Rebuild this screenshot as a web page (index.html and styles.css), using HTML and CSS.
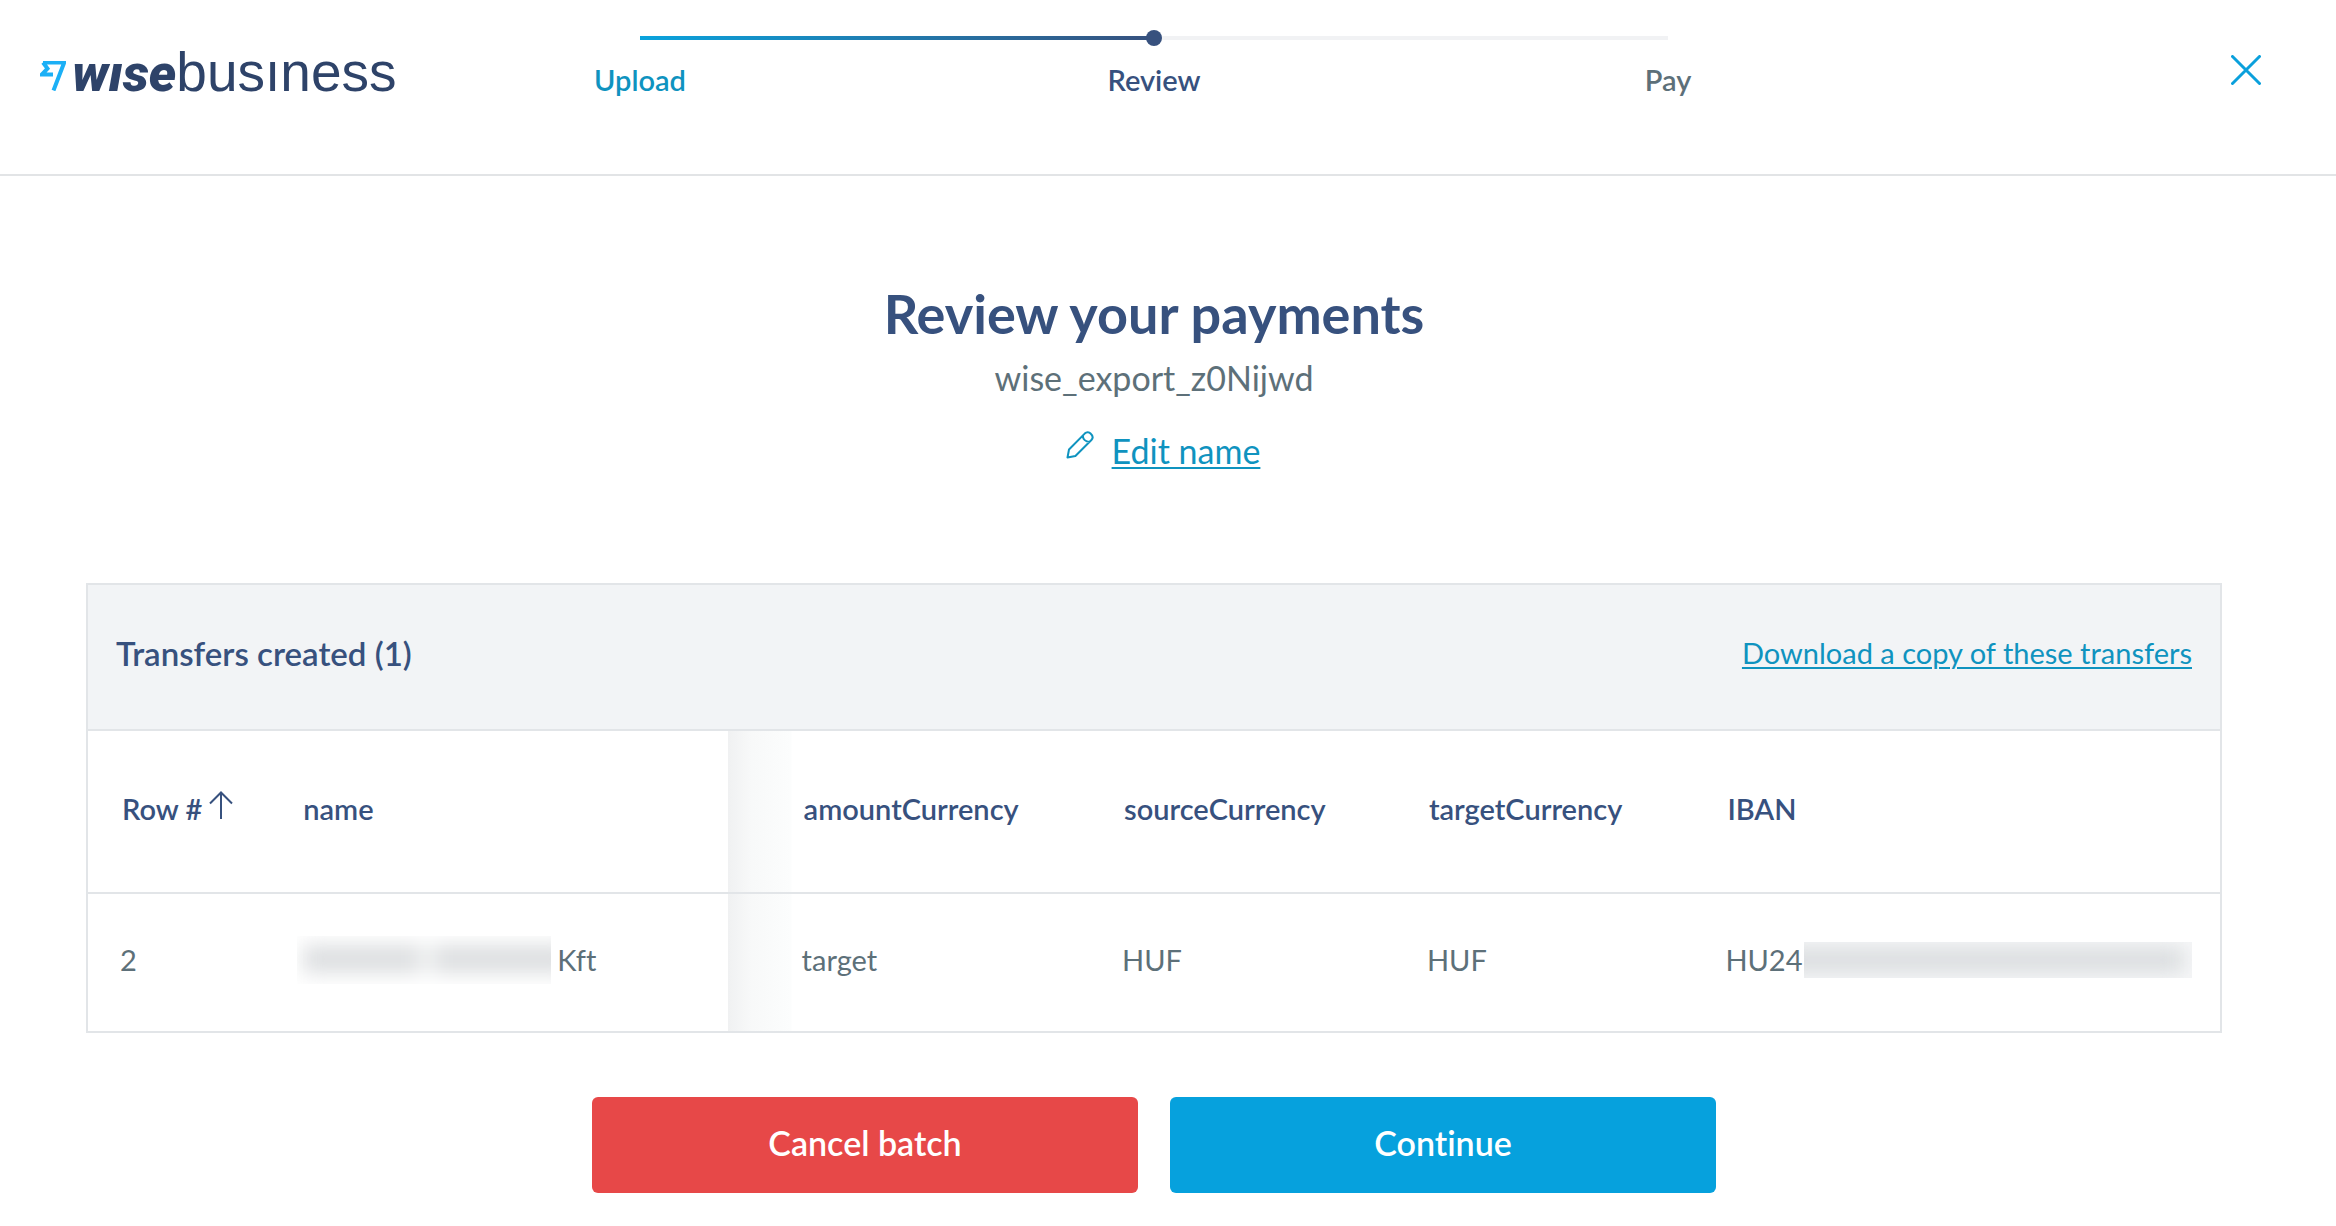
FILE: index.html
```
<!DOCTYPE html>
<html lang="en">
  <head>
    <meta charset="UTF-8" />
    <meta name="viewport" content="width=device-width, initial-scale=1.0" />
    <title>Review your payments</title>
    <link rel="stylesheet" href="styles.css">
  </head>
  <body>
    <header class="topbar">
      <a href="#" class="logo" aria-label="Wise Business">
        <svg class="logo-flag" viewBox="0 0 26 30" aria-hidden="true">
          <path d="M3 1.5H24.2L13.5 29.5M3 1.5L7.5 7.5L1.8 13.6H13" />
        </svg>
        <span class="logo-wise">wıse</span><span class="logo-business">busıness</span>
      </a>

      <nav class="stepper" aria-label="Progress">
        <div class="track">
          <div class="track-done"></div>
        </div>
        <ol class="steps">
          <li><a href="#" class="step done">Upload</a></li>
          <li class="step active" aria-current="step">Review</li>
          <li class="step">Pay</li>
        </ol>
      </nav>

      <button type="button" class="close" aria-label="Close">
        <svg viewBox="0 0 30 30" aria-hidden="true">
          <path d="M1.5 1.5L28.5 28.5M28.5 1.5L1.5 28.5" />
        </svg>
      </button>
    </header>

    <main class="content">
      <section class="intro">
        <h1>Review your payments</h1>
        <p class="batch-name">wise_export_z0Nijwd</p>
        <a href="#" class="edit-name">
          <svg viewBox="0 0 28 28" aria-hidden="true">
            <path d="M1.5 26.5L3 18.5L18.7 2.6C20.6 .8 23 .9 24.8 2.8C27 4.9 27.1 7.2 25.4 9L9.4 25L1.5 26.5ZM16.8 4.6C17 8.2 19.6 10.9 23.4 11" />
          </svg>
          <span>Edit name</span>
        </a>
      </section>

      <section class="panel">
        <div class="panel-header">
          <h2>Transfers created (1)</h2>
          <a href="#">Download a copy of these transfers</a>
        </div>

        <table class="transfers">
          <colgroup>
            <col class="col-row" />
            <col class="col-name" />
            <col class="col-amount" />
            <col class="col-source" />
            <col class="col-target" />
            <col />
          </colgroup>
          <thead>
            <tr>
              <th scope="col" aria-sort="ascending">
                <button type="button" class="sort">
                  Row #
                  <svg viewBox="0 0 24 28" aria-hidden="true">
                    <path d="M12 28V2M1 12.5L12 1.5L23 12.5" />
                  </svg>
                </button>
              </th>
              <th scope="col">name</th>
              <th scope="col" class="edge">amountCurrency</th>
              <th scope="col">sourceCurrency</th>
              <th scope="col">targetCurrency</th>
              <th scope="col">IBAN</th>
            </tr>
          </thead>
          <tbody>
            <tr>
              <td>2</td>
              <td>
                <div class="value"><span class="hidden-name"></span>Kft</div>
              </td>
              <td class="edge">target</td>
              <td>HUF</td>
              <td>HUF</td>
              <td>
                <div class="value">HU241<span class="hidden-iban"></span></div>
              </td>
            </tr>
          </tbody>
        </table>
      </section>

      <div class="actions">
        <button type="button" class="btn btn-cancel">Cancel batch</button>
        <button type="button" class="btn btn-continue">Continue</button>
      </div>
    </main>
  </body>
</html>
```
FILE: styles.css
```
* {
  margin: 0;
  padding: 0;
  box-sizing: border-box;
}

body {
  font-family: Lato, 'Open Sans', sans-serif;
  font-size: 29px;
  font-variant-ligatures: none;
  line-height: 36px;
  color: #5d7079;
  background: #fff;
}

button {
  font: inherit;
  font-variant-ligatures: none;
  color: inherit;
  background: none;
  border: none;
  cursor: pointer;
}

svg {
  fill: none;
  stroke: currentColor;
}

a {
  color: #0f93bf;
  text-decoration-thickness: 2px;
  text-underline-offset: 3px;
}

/* Top bar */
.topbar {
  display: grid;
  grid-template-columns: 1fr minmax(0, 1148px) 1fr;
  align-items: start;
  padding: 30px 68px 0 40px;
  height: 176px;
  border-bottom: 2px solid #e2e4e6;
}

.logo {
  display: flex;
  align-items: baseline;
  color: #2e4369;
  line-height: 60px;
  padding-top: 12px;
  text-decoration: none;
  white-space: nowrap;
}

.logo-flag {
  width: 26px;
  height: 30px;
  margin-right: 6px;
  color: #1cb0f6;
  stroke-width: 4;
}

.logo-wise {
  font-family: Roboto, sans-serif;
  font-size: 52px;
  font-weight: 900;
  font-style: italic;
}

.logo-business {
  font-family: 'Liberation Sans', Arial, sans-serif;
  font-size: 55px;
}

.track {
  height: 16px;
  margin: 0 60px;
  padding: 6px 0;
  background: #f1f2f4 content-box;
}

.track-done {
  position: relative;
  width: 50%;
  height: 4px;
  background: linear-gradient(90deg, #0aa3dd, #37517e);
}

.track-done::after {
  content: '';
  position: absolute;
  top: -6px;
  right: -8px;
  width: 16px;
  height: 16px;
  border-radius: 50%;
  background: #37517e;
}

.steps {
  display: flex;
  justify-content: space-between;
  margin-top: 16px;
  list-style: none;
}

.steps li {
  width: 120px;
  text-align: center;
}

.step {
  font-weight: 600;
  text-decoration: none;
}

.step.active {
  color: #37517e;
}

.close {
  justify-self: end;
  width: 44px;
  height: 44px;
  padding: 7px;
  margin-top: 18px;
  color: #0aa0dc;
}

.close svg {
  display: block;
  width: 30px;
  height: 30px;
  stroke-width: 3;
  stroke-linecap: round;
}

/* Content */
.content {
  padding: 104px 114px 34px 86px;
}

.intro {
  text-align: center;
  margin-bottom: 112px;
}

.intro h1 {
  font-size: 54px;
  line-height: 68px;
  font-weight: 700;
  color: #37517e;
}

.batch-name,
.edit-name {
  font-size: 34px;
  line-height: 40px;
}

.batch-name {
  margin: 10px 0 32px;
}

.edit-name {
  display: inline-flex;
  gap: 18px;
  margin-left: 18px;
  text-decoration: none;
}

.edit-name span {
  text-decoration: underline;
  text-decoration-thickness: 2px;
}

.edit-name svg {
  width: 28px;
  height: 28px;
  stroke-width: 2;
  stroke-linejoin: round;
}

/* Transfers */
.panel {
  border: 2px solid #e2e5e8;
}

.panel-header {
  display: flex;
  align-items: center;
  justify-content: space-between;
  height: 146px;
  padding: 0 28px 8px;
  background: #f2f4f6;
  border-bottom: 2px solid #e2e5e8;
}

.panel-header h2 {
  font-size: 33px;
  font-weight: 600;
  color: #37517e;
}

.transfers {
  width: 100%;
  table-layout: fixed;
  border-collapse: collapse;
  text-align: left;
}

.col-row {
  width: 8.5%;
}

.col-name {
  width: 21.5%;
}

.col-amount {
  width: 17%;
}

.col-source {
  width: 14.3%;
}

.col-target {
  width: 14%;
}

.transfers th {
  height: 162px;
  padding: 0 0 6px 34px;
  font-weight: 600;
  color: #37517e;
  border-bottom: 2px solid #e2e5e8;
}

.transfers td {
  height: 138px;
  padding: 0 0 6px 32px;
}

.transfers .edge {
  padding-left: 74px;
  background: linear-gradient(90deg, #f0f1f2, #f8f9f9 24px, #fcfdfd 63px, #fff 64px);
}

.transfers th.edge {
  padding-left: 76px;
}

.sort {
  display: flex;
  gap: 7px;
}

.sort svg {
  width: 24px;
  height: 28px;
  stroke-width: 2;
}

.value {
  display: flex;
  align-items: center;
}

.hidden-name,
.hidden-iban {
  overflow: hidden;
}

.hidden-name::before,
.hidden-iban::before {
  content: '';
  display: block;
  filter: blur(10px);
}

.hidden-name {
  width: 254px;
  height: 48px;
  margin-left: -4px;
  margin-right: 6px;
}

.hidden-name::before {
  height: 28px;
  margin: 9px -20px 0 6px;
  background: linear-gradient(90deg, #dcdee0 116px, #f4f5f5 118px 130px, #dcdee0 132px);
}

.hidden-iban {
  width: 388px;
  height: 36px;
  margin-left: -15px;
  background: #f6f7f8;
}

.hidden-iban::before {
  height: 24px;
  margin: 6px 8px 0 -20px;
  background: #d9dcde;
}

/* Actions */
.actions {
  display: flex;
  justify-content: center;
  gap: 32px;
  margin-top: 64px;
}

.btn {
  width: 546px;
  height: 96px;
  padding-bottom: 4px;
  border-radius: 6px;
  font-size: 34px;
  font-weight: 600;
  color: #fff;
}

.btn-cancel {
  background: #e74848;
}

.btn-continue {
  background: #06a1dd;
}
```
